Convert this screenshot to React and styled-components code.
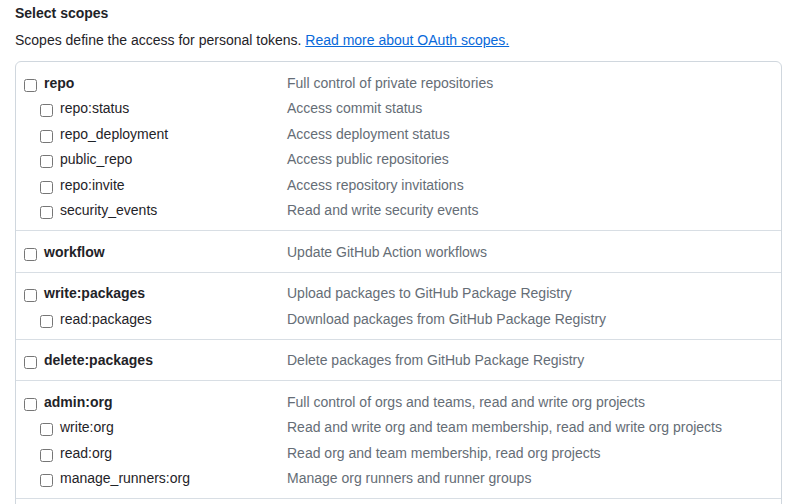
import React from 'react'
import styled, { createGlobalStyle } from 'styled-components'

const GlobalStyle = createGlobalStyle`
  body {
    margin: 0;
    background: #ffffff;
    font-family: 'Liberation Sans', Arial, sans-serif;
    font-size: 14px;
    color: #1f2328;
  }
`

const Page = styled.div`
  padding: 3px 11px 0 15px;
`

const Heading = styled.h3`
  margin: 0;
  font-size: 14px;
  font-weight: bold;
  line-height: 21px;
`

const Intro = styled.p`
  margin: 6px 0 10px;
  line-height: 21px;
  a {
    color: #0969da;
    text-decoration: underline;
  }
`

const ScopeBox = styled.div`
  border: 1px solid #d0d7de;
  border-radius: 6px;
  border-bottom-left-radius: 0;
  border-bottom-right-radius: 0;
`

const Group = styled.div`
  padding: 7.5px 0;
  border-top: ${p => (p.first ? 'none' : '1px solid #d8dee4')};
`

const Row = styled.label`
  display: grid;
  grid-template-columns: 271px 1fr;
  align-items: center;
  box-sizing: border-box;
  height: 25.5px;
  padding-top: 1.5px;
  line-height: 21px;
`

const Name = styled.span`
  display: flex;
  align-items: center;
  padding-left: ${p => (p.child ? '20px' : '4px')};
  font-weight: ${p => (p.child ? 'normal' : 'bold')};
  color: #1f2328;

  input {
    width: 13px;
    height: 13px;
    margin: 4.5px 7px 0 4px;
  }
`

const Desc = styled.span`
  color: #656d76;
`

const groups = [
  [
    ['repo', 'Full control of private repositories'],
    ['repo:status', 'Access commit status'],
    ['repo_deployment', 'Access deployment status'],
    ['public_repo', 'Access public repositories'],
    ['repo:invite', 'Access repository invitations'],
    ['security_events', 'Read and write security events'],
  ],
  [['workflow', 'Update GitHub Action workflows']],
  [
    ['write:packages', 'Upload packages to GitHub Package Registry'],
    ['read:packages', 'Download packages from GitHub Package Registry'],
  ],
  [['delete:packages', 'Delete packages from GitHub Package Registry']],
  [
    ['admin:org', 'Full control of orgs and teams, read and write org projects'],
    ['write:org', 'Read and write org and team membership, read and write org projects'],
    ['read:org', 'Read org and team membership, read org projects'],
    ['manage_runners:org', 'Manage org runners and runner groups'],
  ],
  [['admin:public_key', 'Full control of user public keys']],
]

const App = () => (
  <Page>
    <GlobalStyle />
    <Heading>Select scopes</Heading>
    <Intro>
      Scopes define the access for personal tokens.{' '}
      <a href="#oauth">Read more about OAuth scopes.</a>
    </Intro>
    <ScopeBox>
      {groups.map((group, gi) => (
        <Group key={group[0][0]} first={gi === 0}>
          {group.map(([name, desc], i) => (
            <Row key={name}>
              <Name child={i > 0}>
                <input type="checkbox" />
                {name}
              </Name>
              <Desc>{desc}</Desc>
            </Row>
          ))}
        </Group>
      ))}
    </ScopeBox>
  </Page>
)

export default App
